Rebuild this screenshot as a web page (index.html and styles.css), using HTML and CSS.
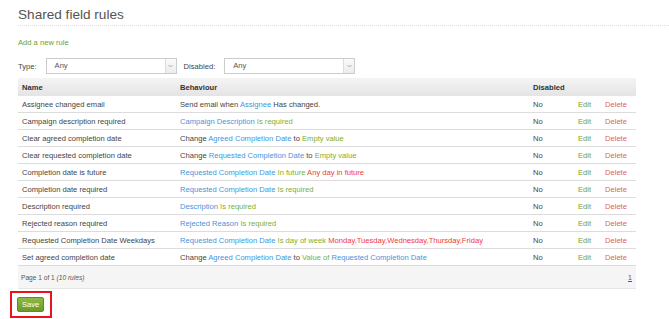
FILE: index.html
```html
<!DOCTYPE html>
<html>
<head>
<meta charset="utf-8">
<link rel="stylesheet" href="styles.css">
</head>
<body>
<div class="page">
  <h1 class="title">Shared field rules</h1>
  <div class="content">
    <a class="add-link" href="#">Add a new rule</a>
    <div class="filters">
      <span class="flabel">Type:</span>
      <div class="select"><span class="sval">Any</span><span class="sarrow"><svg width="5" height="4" viewBox="0 0 5 4"><path d="M0.5 1 L2.5 3 L4.5 1" fill="none" stroke="#999" stroke-width="0.8"/></svg></span></div>
      <span class="flabel">Disabled:</span>
      <div class="select"><span class="sval">Any</span><span class="sarrow"><svg width="5" height="4" viewBox="0 0 5 4"><path d="M0.5 1 L2.5 3 L4.5 1" fill="none" stroke="#999" stroke-width="0.8"/></svg></span></div>
    </div>
    <table class="rules">
      <colgroup><col class="c-name"><col class="c-beh"><col class="c-dis"><col class="c-edit"><col class="c-del"></colgroup>
      <thead>
        <tr><th>Name</th><th>Behaviour</th><th>Disabled</th><th></th><th></th></tr>
      </thead>
      <tbody>
        <tr><td>Assignee changed email</td><td>Send email when <span class="b">Assignee</span> Has changed.</td><td>No</td><td class="edit">Edit</td><td class="del">Delete</td></tr>
        <tr><td>Campaign description required</td><td><span class="b">Campaign Description</span> <span class="g">Is required</span></td><td>No</td><td class="edit">Edit</td><td class="del">Delete</td></tr>
        <tr><td>Clear agreed completion date</td><td>Change <span class="b">Agreed Completion Date</span> to <span class="g">Empty value</span></td><td>No</td><td class="edit">Edit</td><td class="del">Delete</td></tr>
        <tr><td>Clear requested completion date</td><td>Change <span class="b">Requested Completion Date</span> to <span class="g">Empty value</span></td><td>No</td><td class="edit">Edit</td><td class="del">Delete</td></tr>
        <tr><td>Completion date is future</td><td><span class="b">Requested Completion Date</span> <span class="g">In future</span> <span class="r">Any day in future</span></td><td>No</td><td class="edit">Edit</td><td class="del">Delete</td></tr>
        <tr><td>Completion date required</td><td><span class="b">Requested Completion Date</span> <span class="g">Is required</span></td><td>No</td><td class="edit">Edit</td><td class="del">Delete</td></tr>
        <tr><td>Description required</td><td><span class="b">Description</span> <span class="g">Is required</span></td><td>No</td><td class="edit">Edit</td><td class="del">Delete</td></tr>
        <tr><td>Rejected reason required</td><td><span class="b">Rejected Reason</span> <span class="g">Is required</span></td><td>No</td><td class="edit">Edit</td><td class="del">Delete</td></tr>
        <tr><td>Requested Completion Date Weekdays</td><td><span class="b">Requested Completion Date</span> <span class="g">Is day of week</span> <span class="r">Monday,Tuesday,Wednesday,Thursday,Friday</span></td><td>No</td><td class="edit">Edit</td><td class="del">Delete</td></tr>
        <tr><td>Set agreed completion date</td><td>Change <span class="b">Agreed Completion Date</span> to <span class="g">Value of</span> <span class="b">Requested Completion Date</span></td><td>No</td><td class="edit">Edit</td><td class="del">Delete</td></tr>
      </tbody>
    </table>
    <div class="pager">
      <span class="pinfo">Page 1 of 1 <em>(10 rules)</em></span>
      <a class="pnum" href="#">1</a>
    </div>
    <div class="actions">
      <div class="highlight"><button class="save">Save</button></div>
    </div>
  </div>
</div>
</body>
</html>
```

FILE: styles.css
```css
html, body {
  margin: 0;
  padding: 0;
  background: #fff;
}
body {
  font-family: "Liberation Sans", Arial, sans-serif;
  color: #444;
  font-size: 7.6px;
}
.page {
  padding-left: 18px;
}
.title {
  margin: 0;
  padding-top: 5px;
  font-size: 13.6px;
  font-weight: normal;
  line-height: 19px;
  height: 20px;
  color: #555;
  border-bottom: 1px dotted #ddd;
}
.content {
  width: 618px;
}
.add-link {
  display: block;
  margin-top: 12px;
  color: #6f9e2c;
  text-decoration: none;
  line-height: 10px;
}
.filters {
  display: flex;
  align-items: center;
  margin-top: 10px;
  height: 16px;
}
.flabel {
  color: #444;
  margin-right: 9px;
}
.select {
  display: flex;
  align-items: stretch;
  width: 129px;
  height: 14px;
  border: 1px solid #ccc;
  background: #fff;
  margin-right: 7px;
}
.sval {
  flex: 1;
  padding-left: 8px;
  line-height: 14px;
  color: #555;
}
.sarrow {
  width: 10px;
  border-left: 1px solid #ddd;
  background: linear-gradient(#fafafa, #ececec);
  display: flex;
  align-items: center;
  justify-content: center;
}
.rules {
  width: 618px;
  table-layout: fixed;
  border-collapse: collapse;
  margin-top: 4px;
}
.c-name { width: 158px; }
.c-beh { width: 353px; }
.c-dis { width: 45px; }
.c-edit { width: 27px; }
.c-del { width: 35px; }
.rules th {
  text-align: left;
  font-weight: bold;
  color: #333;
  height: 18px;
  padding: 0 0 0 4px;
  background: linear-gradient(#f4f4f4, #e4e4e4);
}
.rules td {
  height: 16px;
  padding: 0 0 0 4px;
  border-bottom: 1px solid #dcdcdc;
  white-space: nowrap;
  color: #444;
}
.b { color: #3f96dc; }
.g { color: #7bb030; }
.r { color: #f2383a; }
.rules td.edit { color: #79a030; }
.rules td.del { color: #e0654f; }
.pager {
  display: flex;
  justify-content: space-between;
  align-items: center;
  height: 22px;
  background: #f5f5f5;
  border-bottom: 1px solid #e6e6e6;
  padding: 0 4px 0 3px;
}
.pinfo {
  font-size: 6.6px;
  color: #555;
}
.pnum {
  font-size: 7px;
  color: #555;
  text-decoration: underline;
}
.actions {
  padding-top: 2px;
  margin-left: -8px;
}
.highlight {
  display: inline-block;
  border: 2px solid #e8131b;
  padding: 4px 6px 4px 5px;
}
.save {
  display: block;
  font-family: "Liberation Sans", Arial, sans-serif;
  font-size: 7.6px;
  color: #fff;
  background: linear-gradient(#8fba46, #6a9a28);
  border: 1px solid #5f8c22;
  border-radius: 2px;
  height: 15px;
  padding: 0 4px;
  line-height: 13px;
}
```
